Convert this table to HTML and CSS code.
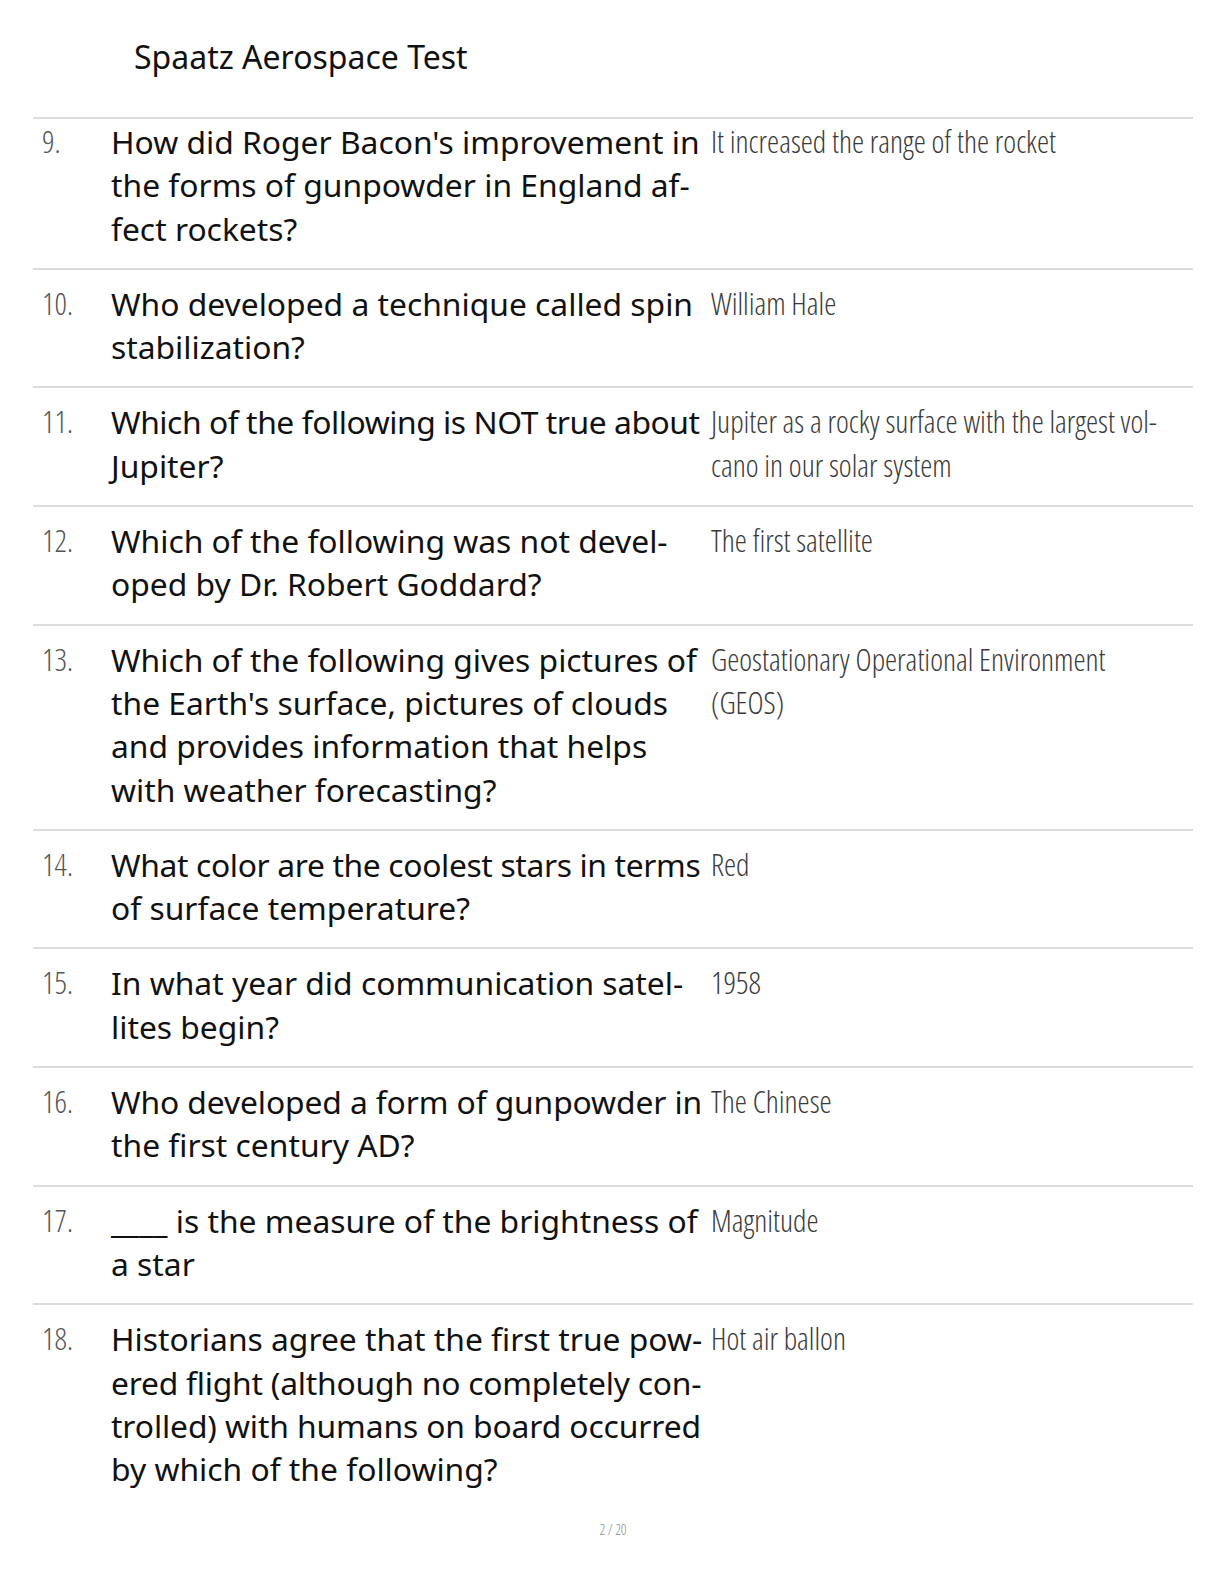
FILE: index.html
```html
<!DOCTYPE html>
<html lang="en">
<head>
<meta charset="utf-8">
<title>Spaatz Aerospace Test</title>
<link rel="stylesheet" href="styles.css">
</head>
<body>
<div class="page">
  <header class="head">
    <h1 class="title">Spaatz Aerospace Test</h1>
  </header>
  <div class="list">
    <div class="row first">
      <div class="num">9.</div>
      <div class="q">How did Roger Bacon's improvement in<br>the forms of gunpowder in England af-<br>fect rockets?</div>
      <div class="a">It increased the range of the rocket</div>
    </div>
    <div class="row">
      <div class="num">10.</div>
      <div class="q">Who developed a technique called spin<br>stabilization?</div>
      <div class="a">William Hale</div>
    </div>
    <div class="row">
      <div class="num">11.</div>
      <div class="q"><span class="fit-l">Which of the following is NOT true about</span><br>Jupiter?</div>
      <div class="a">Jupiter as a rocky surface with the largest vol-<br>cano in our solar system</div>
    </div>
    <div class="row">
      <div class="num">12.</div>
      <div class="q">Which of the following was not devel-<br>oped by Dr. Robert Goddard?</div>
      <div class="a">The first satellite</div>
    </div>
    <div class="row">
      <div class="num">13.</div>
      <div class="q">Which of the following gives pictures of<br>the Earth's surface, pictures of clouds<br>and provides information that helps<br>with weather forecasting?</div>
      <div class="a">Geostationary Operational Environment<br>(GEOS)</div>
    </div>
    <div class="row">
      <div class="num">14.</div>
      <div class="q"><span class="fit-m">What color are the coolest stars in terms</span><br>of surface temperature?</div>
      <div class="a">Red</div>
    </div>
    <div class="row">
      <div class="num">15.</div>
      <div class="q">In what year did communication satel-<br>lites begin?</div>
      <div class="a">1958</div>
    </div>
    <div class="row">
      <div class="num">16.</div>
      <div class="q"><span class="fit-xs">Who developed a form of gunpowder in</span><br>the first century AD?</div>
      <div class="a">The Chinese</div>
    </div>
    <div class="row">
      <div class="num">17.</div>
      <div class="q">____ is the measure of the brightness of<br>a star</div>
      <div class="a">Magnitude</div>
    </div>
    <div class="row">
      <div class="num">18.</div>
      <div class="q">Historians agree that the first true pow-<br><span class="fit-s">ered flight (although no completely con-</span><br><span class="fit-xs">trolled) with humans on board occurred</span><br>by which of the following?</div>
      <div class="a">Hot air ballon</div>
    </div>
  </div>
  <footer class="foot">2 / 20</footer>
</div>
</body>
</html>
```
FILE: styles.css
```css
html, body {
  margin: 0;
  padding: 0;
  background: #ffffff;
}

.page {
  width: 1224px;
  min-height: 1584px;
  box-sizing: border-box;
  padding: 0 31px 0 33px;
  font-family: "Noto Sans", "Open Sans", sans-serif;
  color: #111;
}

.head {
  height: 119px;
  border-bottom: 2px solid #dcdcde;
  box-sizing: border-box;
  padding-left: 101px;
  padding-top: 35px;
}

.title {
  margin: 0;
  font-size: 32px;
  font-weight: 400;
  line-height: 44px;
  color: #111;
}

.list {
  display: flex;
  flex-direction: column;
}

.row {
  display: grid;
  grid-template-columns: 78px 592px 1fr;
  border-top: 2px solid #dcdcde;
  padding: 12px 0 18px 0;
  line-height: 43.3px;
}

.row.first {
  border-top: none;
  padding-top: 1px;
}

.num {
  padding-left: 9px;
  font-family: "Open Sans", sans-serif;
  font-size: 30.6px;
  font-weight: 300;
  font-stretch: 75%;
  color: #555;
}

.q {
  font-size: 31.8px;
  font-weight: 400;
  white-space: nowrap;
  color: #111;
}

/* per-line tracking so each line keeps the source line width */
.fit-l {
  letter-spacing: -0.44px;
}

.fit-m {
  letter-spacing: -0.35px;
}

.fit-s {
  letter-spacing: -0.22px;
}

.fit-xs {
  letter-spacing: -0.11px;
}

.a {
  padding-left: 8px;
  padding-right: 20px;
  font-family: "Open Sans", sans-serif;
  font-size: 30.6px;
  font-weight: 300;
  font-stretch: 75%;
  white-space: nowrap;
  color: #3a3a3a;
}

.foot {
  text-align: center;
  font-family: "Open Sans", sans-serif;
  font-size: 14px;
  line-height: 20px;
  font-weight: 300;
  font-stretch: 75%;
  color: #8a8a8a;
  padding-top: 12px;
}
```
